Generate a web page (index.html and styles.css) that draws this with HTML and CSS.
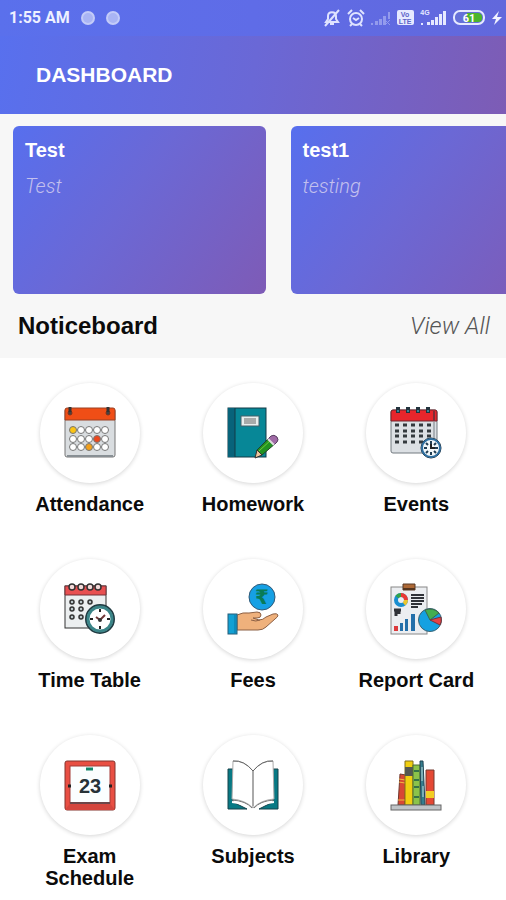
FILE: index.html
```html
<!DOCTYPE html>
<html lang="en">
<head>
    <meta charset="UTF-8">
    <meta name="viewport" content="width=device-width, initial-scale=1.0">
    <title>Dashboard</title>
    <link rel="stylesheet" href="styles.css">
</head>
<body>

<!-- Status bar -->
<div class="status">
    <span class="status-time">1:55 AM</span>
    <span class="status-dot"></span>
    <span class="status-dot"></span>
    <div class="status-icons">
        <svg width="18" height="18" viewBox="0 0 18 18" fill="none" stroke="#dfe3ff" stroke-width="2">
            <path d="M3 13h12l-2-3V7c0-5-8-5-8 0v3zM7 15h4M2 17L16 1"/>
        </svg>
        <svg width="18" height="18" viewBox="0 0 18 18" fill="none" stroke="#dfe3ff" stroke-width="2">
            <circle cx="9" cy="10" r="6"/>
            <path d="M1 5l4-4M17 5l-4-4M6 9l3 2 3-2M5 15l-2 2M13 15l2 2"/>
        </svg>
        <svg class="faded" width="20" height="16" viewBox="0 0 20 16" fill="#dfe3ff">
            <path d="M0 13h2v2H0zM4 11h3v4H4zM8 9h3v6H8zM12 6h3v9h-3zM17 2h2v7h-2z"/>
            <path d="M14 10l5 5M19 10l-5 5" stroke="#dfe3ff"/>
        </svg>
        <svg width="17" height="16" viewBox="0 0 17 16">
            <rect width="17" height="15" rx="2" fill="#e6e9ff"/>
            <text x="8" y="7" class="tiny" fill="#5b62c8">Vo</text>
            <text x="8" y="14" class="tiny" fill="#5b62c8">LTE</text>
        </svg>
        <svg width="27" height="18" viewBox="0 0 27 18" fill="#e6e9ff">
            <text x="5" y="6" class="tiny">4G</text>
            <path d="M1 14h2v2H1zM7 13h3v3H7zM11 11h3v5h-3zM15 8h3v8h-3zM19 5h3v11h-3zM23 2h3v14h-3z"/>
        </svg>
        <svg width="33" height="16" viewBox="0 0 33 16">
            <rect x="1" y="1" width="30" height="13" rx="6" fill="#6670d8" stroke="#e6e9ff" stroke-width="2"/>
            <path d="M14 3h11a4 4 0 0 1 4 5 4 4 0 0 1-4 4H14z" fill="#4bb52b"/>
            <text x="16" y="12" class="battery" fill="#fff">61</text>
        </svg>
        <svg width="10" height="16" viewBox="0 0 10 16" fill="#f2f3ff">
            <path d="M7 1L0 9h4l-2 6 8-8H5z"/>
        </svg>
    </div>
</div>

<header class="header">
    <h1>DASHBOARD</h1>
</header>

<!-- Notices -->
<section class="notices">
    <div class="notice-list">
        <article class="notice">
            <h2>Test</h2>
            <p>Test</p>
        </article>
        <article class="notice">
            <h2>test1</h2>
            <p>testing</p>
        </article>
    </div>
    <div class="notice-footer">
        <h2>Noticeboard</h2>
        <a href="#">View All</a>
    </div>
</section>

<!-- Main menu -->
<nav class="menu">
    <a class="menu-item" href="#">
        <span class="circle">
            <svg class="icon" viewBox="0 0 52 52">
                <rect x="1" y="2" width="50" height="48" rx="2" fill="#d9dde0" stroke="#777" stroke-width="1"/>
                <path d="M1 13V3q0-2 2-2h46q2 0 2 2v10z" fill="#f04e16" stroke="#9b4023" stroke-width="1"/>
                <path d="M3 49h46" stroke="#888f94" stroke-width="2"/>
                <g fill="#444" stroke="#7a3320"><circle cx="6" cy="6" r="2"/><circle cx="44" cy="6" r="2"/><path d="M6 0v5M44 0v5" stroke="#333" stroke-width="3"/></g>
                <g fill="#fff" stroke="#777">
                    <circle cx="9" cy="23" r="3.5" fill="#fbc414"/><circle cx="17" cy="23" r="3.5"/><circle cx="25" cy="23" r="3.5"/><circle cx="33" cy="23" r="3.5"/><circle cx="41" cy="23" r="3.5"/>
                    <circle cx="9" cy="32" r="3.5"/><circle cx="17" cy="32" r="3.5"/><circle cx="25" cy="32" r="3.5"/><circle cx="33" cy="32" r="3.5" fill="#ed471d"/><circle cx="41" cy="32" r="3.5"/>
                    <circle cx="9" cy="40" r="3.5"/><circle cx="17" cy="40" r="3.5"/><circle cx="25" cy="40" r="3.5" fill="#f3a01b"/><circle cx="33" cy="40" r="3.5"/><circle cx="41" cy="40" r="3.5"/>
                </g>
            </svg>
        </span>
        <span class="label">Attendance</span>
    </a>

    <a class="menu-item" href="#">
        <span class="circle">
            <svg class="icon" viewBox="0 0 52 52">
                <rect x="1" y="1" width="38" height="49" fill="#078797" stroke="#123b46" stroke-width="1"/>
                <path d="M1 1h7v49H1z" fill="#08637a"/>
                <path d="M8 1v49" stroke="#123b46"/>
                <rect x="14" y="9" width="18" height="10" fill="#e9eeee" stroke="#45606a"/>
                <path d="M17 12h12M17 14h12M17 16h12" stroke="#666"/>
                <path d="M30 43l13-13 6 6-14 12-6 2z" fill="#219321" stroke="#23412a"/>
                <path d="M32 44l13-12" stroke="#73c83b"/>
                <path d="M30 43l5 5-7 3z" fill="#efc79f" stroke="#333"/>
                <path d="M41 32l3-3q3-2 6 1 2 3 0 5l-3 3z" fill="#a06aa6" stroke="#574060"/>
                <path d="M41 32l6 6" stroke="#ddd" stroke-width="2"/>
            </svg>
        </span>
        <span class="label">Homework</span>
    </a>

    <a class="menu-item" href="#">
        <span class="circle">
            <svg class="icon" viewBox="0 0 52 52">
                <rect x="1" y="3" width="46" height="43" rx="2" fill="#dce0e4" stroke="#737a80"/>
                <path d="M1 14V5q0-2 2-2h42q2 0 2 2v9z" fill="#e7262c" stroke="#72242c"/>
                <path d="M44 4v10" stroke="#812c37" stroke-width="2"/>
                <path d="M44 15v16" stroke="#a9afb4" stroke-width="2"/>
                <g fill="none" stroke="#22333d" stroke-width="4"><path d="M8 0v6M18 0v6M28 0v6M38 0v6"/></g>
                <g fill="#38a2b5"><circle cx="8" cy="4" r="1"/><circle cx="18" cy="4" r="1"/><circle cx="28" cy="4" r="1"/><circle cx="38" cy="4" r="1"/></g>
                <path d="M5 18h38M5 24h38M5 29h38M5 35h38" stroke="#343a3e" stroke-width="3" stroke-dasharray="4 4"/>
                <circle cx="41" cy="41" r="10" fill="#f3f8fa" stroke="#24333e"/>
                <circle cx="41" cy="41" r="9" fill="none" stroke="#2d6ea0" stroke-width="2"/>
                <path d="M41 34v3M41 45v3M34 41h3M45 41h3M36 36l2 2M46 36l-2 2M36 46l2-2M46 46l-2-2" stroke="#203d52" stroke-width="2"/>
                <path d="M41 37v4h4" fill="none" stroke="#222" stroke-width="2"/>
            </svg>
        </span>
        <span class="label">Events</span>
    </a>

    <a class="menu-item" href="#">
        <span class="circle">
            <svg class="icon" viewBox="0 0 52 52">
                <rect x="1" y="3" width="41" height="42" fill="#eceff0" stroke="#333"/>
                <path d="M1 3h41v9H1z" fill="#e85051" stroke="#713338"/>
                <g fill="#f4dada" stroke="#333" stroke-width="1.5"><circle cx="8" cy="4" r="3"/><circle cx="17" cy="4" r="3"/><circle cx="26" cy="4" r="3"/><circle cx="34" cy="4" r="3"/></g>
                <g fill="#bcc8cb" stroke="#333" stroke-width="1.5">
                    <circle cx="8" cy="19" r="2"/><circle cx="17" cy="19" r="2"/><circle cx="26" cy="19" r="2"/>
                    <circle cx="8" cy="26" r="2"/><circle cx="17" cy="26" r="2"/>
                    <circle cx="8" cy="34" r="2"/><circle cx="17" cy="34" r="2"/>
                </g>
                <circle cx="36" cy="36" r="14" fill="#fff" stroke="#213b42" stroke-width="2"/>
                <circle cx="36" cy="36" r="12" fill="none" stroke="#3b8588" stroke-width="3"/>
                <path d="M36 26v3M36 43v3M26 36h3M43 36h3" stroke="#222" stroke-width="2"/>
                <path d="M32 34l4 3 5-5" fill="none" stroke="#703636" stroke-width="2"/>
                <circle cx="36" cy="37" r="2" fill="#333"/>
            </svg>
        </span>
        <span class="label">Time Table</span>
    </a>

    <a class="menu-item" href="#">
        <span class="circle">
            <svg class="icon" viewBox="0 0 52 52">
                <circle cx="35" cy="14" r="13" fill="#16a0e4" stroke="#315977"/>
                <text x="35" y="21" class="rupee" fill="#087b58">₹</text>
                <path d="M10 32q6-3 12-2l8-1q4 0 4 3t-4 3h-4l6 2q4 0 7-3l7-3q4-1 5 1 0 2-3 4l-9 8q-3 3-8 3H10z" fill="#efb17c" stroke="#8c6045"/>
                <path d="M24 37q5 2 9 0" fill="none" stroke="#8c6045"/>
                <rect x="1" y="31" width="9" height="20" fill="#12a0d3" stroke="#245d79"/>
                <path d="M8 32v18" stroke="#0877a5"/>
            </svg>
        </span>
        <span class="label">Fees</span>
    </a>

    <a class="menu-item" href="#">
        <span class="circle">
            <svg class="icon" viewBox="0 0 52 52">
                <rect x="1" y="4" width="36" height="47" fill="#eceef1" stroke="#888"/>
                <path d="M13 1h12v6H13z" fill="#ad6835" stroke="#593a27"/>
                <path d="M13 6h12" stroke="#54351f" stroke-width="2"/>
                <circle cx="11" cy="17" r="5" fill="none" stroke="#198ed0" stroke-width="4"/>
                <path d="M11 12a5 5 0 0 1 5 5" fill="none" stroke="#ec3833" stroke-width="4"/>
                <path d="M7 14a5 5 0 0 1 4-2" fill="none" stroke="#32a249" stroke-width="4"/>
                <path d="M16 17a5 5 0 0 1-2 4" fill="none" stroke="#edc62b" stroke-width="4"/>
                <path d="M21 12h13M21 15h13M21 18h13M21 21h11M21 24h7" stroke="#303238" stroke-width="2"/>
                <path d="M4 27h7M6 28v5M9 28v3" stroke="#303238" stroke-width="3"/>
                <path d="M4 43h4v5H4z" fill="#dc393b"/>
                <path d="M10 40h3v8h-3zM15 36h3v12h-3zM21 31h4v17h-4z" fill="#246fa9"/>
                <circle cx="40" cy="37" r="11.5" fill="#15a1e1" stroke="#3f6372"/>
                <path d="M40 37l-5-10q8-3 14 3z" fill="#43ae50" stroke="#3d654a"/>
                <path d="M40 37l11-3q1 5-1 8z" fill="#e64245" stroke="#74373c"/>
            </svg>
        </span>
        <span class="label">Report Card</span>
    </a>

    <a class="menu-item" href="#">
        <span class="circle">
            <svg class="icon" viewBox="0 0 52 52">
                <rect x="1" y="2" width="50" height="49" rx="2" fill="#e94f43" stroke="#84342f"/>
                <path d="M1 51l6-8h38l6 8" fill="#d4453d"/>
                <rect x="6" y="7" width="40" height="37" fill="#fbfeff" stroke="#a43b37"/>
                <path d="M6 44h40" stroke="#6c4548" stroke-width="2"/>
                <path d="M22 10h7" stroke="#14866a" stroke-width="3"/>
                <path d="M4 27h3M45 27h3" stroke="#222" stroke-width="3"/>
                <text x="26" y="34" class="day" fill="#263238">23</text>
            </svg>
        </span>
        <span class="label">Exam Schedule</span>
    </a>

    <a class="menu-item" href="#">
        <span class="circle">
            <svg class="icon" viewBox="0 0 52 52">
                <path d="M1 10h5v33l14 7H1zM51 10h-5v33l-14 7h19z" fill="#087984" stroke="#16424b"/>
                <path d="M6 2q11-1 20 10v37q-8-8-21-9z" fill="#fff" stroke="#aaa"/>
                <path d="M46 2q-11-1-20 10v37q8-8 21-9z" fill="#fff" stroke="#aaa"/>
                <path d="M6 2q11-1 20 10Q35 1 46 2" fill="none" stroke="#666"/>
                <path d="M26 12v35" stroke="#aaa" stroke-width="2"/>
                <path d="M5 41q14 1 20 8M47 41q-14 1-20 8" fill="none" stroke="#777"/>
                <path d="M5 43q11 1 16 5M47 43q-11 1-16 5" fill="none" stroke="#fff" stroke-width="2"/>
            </svg>
        </span>
        <span class="label">Subjects</span>
    </a>

    <a class="menu-item" href="#">
        <span class="circle">
            <svg class="icon" viewBox="0 0 52 52">
                <path d="M10 15l6 1-1 30H8z" fill="#d84834" stroke="#70372f"/>
                <path d="M9 20l6 1M9 23l6 1M8 41h7" stroke="#f2ba42"/>
                <path d="M15 2h8v44h-8z" fill="#f1cf10" stroke="#816e1b"/>
                <path d="M15 8h8v9h-8z" fill="#545852"/>
                <path d="M23 6h7v40h-7z" fill="#8bc34a" stroke="#4d6c35"/>
                <path d="M24 12h5M24 21h5M24 28h5M24 38h5" stroke="#347447" stroke-width="2"/>
                <path d="M30 2h3l2 44h-4z" fill="#357d8e" stroke="#214453"/>
                <path d="M32 8v14M33 27v11" stroke="#c3dfdf"/>
                <path d="M36 11h8v35h-8z" fill="#e44834" stroke="#743b31"/>
                <path d="M36 32h8v7h-8z" fill="#f3cd23"/>
                <rect x="1" y="46" width="50" height="5" fill="#bfc4c7" stroke="#666"/>
            </svg>
        </span>
        <span class="label">Library</span>
    </a>
</nav>

</body>
</html>
```
FILE: styles.css
```css
* { box-sizing: border-box; }
body { margin: 0; background: #fff; color: #0b0b0b; font-family: "Liberation Sans", Arial, sans-serif; }
h1, h2, p { margin: 0; }
a { color: inherit; text-decoration: none; }

/* Status bar */
.status { display: flex; align-items: center; gap: 11px; height: 36px; padding: 0 4px 0 9px; background: linear-gradient(90deg, #5a70ec, #5f6ce7 50%, #6268dc); }
.status-time { color: #eef0ff; font: 700 16px/20px Roboto, sans-serif; }
.status-dot { width: 14px; height: 14px; border: 2px solid #c3cbf8; border-radius: 50%; background: #a9b4f4; }
.status-icons { display: flex; align-items: center; gap: 6px; margin-left: auto; }
.faded { opacity: 0.4; }
.tiny { font: 700 7px "Liberation Sans", sans-serif; text-anchor: middle; }
.battery { font: 700 11px Roboto, sans-serif; text-anchor: middle; }

.header { display: flex; align-items: center; height: 78px; padding: 0 36px; background: linear-gradient(100deg, #5870ee, #6a68d6 50%, #7d5cb5); }
.header h1 { color: #fff; font-size: 21px; line-height: 24px; }

/* Notices */
.notices { padding-top: 12px; background: #f7f7f7; }
.notice-list { display: flex; gap: 25px; padding-left: 13px; overflow: hidden; }
.notice { flex: 0 0 calc(50% + 6px); height: 168px; padding: 12px; border-radius: 6px; background: linear-gradient(125deg, #576fee, #6b68d5 45%, #7e5bb6); color: #fff; }
.notice h2 { font-size: 20px; line-height: 24px; }
.notice p { margin-top: 12px; color: #c3c0ee; font: italic 300 20px/24px Roboto, sans-serif; }
.notice-footer { display: flex; align-items: center; justify-content: space-between; height: 64px; padding: 0 16px 0 18px; }
.notice-footer h2 { font-size: 24px; line-height: 28px; }
.notice-footer a { color: #555; font: italic 300 24px/28px Roboto, sans-serif; }

/* Menu */
.menu { display: grid; grid-template-columns: repeat(3, 1fr); row-gap: 44px; padding: 25px 8px 0; }
.menu-item { display: flex; flex-direction: column; align-items: center; gap: 10px; }
.circle { display: flex; align-items: center; justify-content: center; width: 100px; height: 100px; border-radius: 50%; background: #fff; box-shadow: 0 1px 4px rgba(0, 0, 0, 0.17); }
.icon { width: 52px; height: 52px; }
.label { max-width: 120px; font-size: 20px; font-weight: 700; line-height: 22px; text-align: center; }
.day { font: 700 20px "Liberation Sans", sans-serif; text-anchor: middle; }
.rupee { font: 700 20px "DejaVu Sans", sans-serif; text-anchor: middle; }
```
